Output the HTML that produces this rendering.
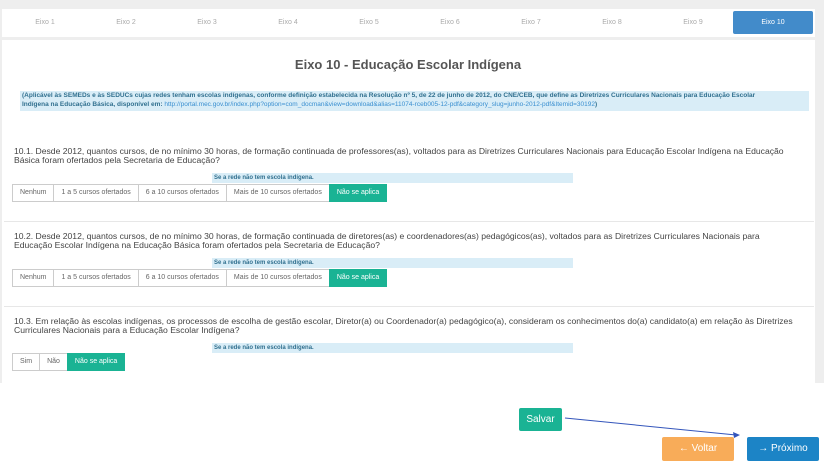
<!DOCTYPE html>
<html><head><meta charset="utf-8"><style>
*{box-sizing:border-box;margin:0;padding:0}
body{width:824px;height:463px;background:#fff;font-family:"Liberation Sans",sans-serif;position:relative;overflow:hidden;color:#444}
.bgtop{position:absolute;left:0;top:0;width:824px;height:383px;background:#eeeeee}
.card{position:absolute;left:2px;top:9px;width:813px;height:28px;background:#fff}
.main{position:absolute;left:2px;top:40px;width:813px;height:343px;background:#fff}
.tab{position:absolute;top:11px;height:23px;width:80px;font-size:7px;color:#aaa;text-align:center;line-height:23px}
.tab.act{background:#428bca;color:#fff;border-radius:2px}
.title{position:absolute;left:0;width:816px;top:57px;text-align:center;font-size:13px;font-weight:bold;color:#555}
.info{position:absolute;left:20px;top:91px;width:789px;height:20px;background:#d9edf7;font-size:6.5px;font-weight:bold;color:#31708f;line-height:8.5px;padding:1px 2px;white-space:nowrap}
.info a{color:#3a8fd0;font-weight:normal;text-decoration:none}
.q{position:absolute;left:14px;font-size:8.6px;line-height:9px;color:#444;white-space:nowrap}
.hint{position:absolute;left:212px;width:361px;height:10px;background:#d9edf7;font-size:6px;font-weight:bold;color:#31708f;line-height:10px;padding-left:2px}
.bg{position:absolute;left:13px;display:flex;height:18px}
.bg span{border:1px solid #ccc;margin-left:-1px;font-size:7px;color:#666;line-height:16px;padding:0 7px;background:#fff}
.bg span.on{background:#1ab394;border-color:#1ab394;color:#fff}
.sep{position:absolute;left:4px;width:810px;height:1px;background:#e7e7e7}
.btn{position:absolute;color:#fff;font-size:10px;text-align:center;border-radius:2px}
</style></head><body>
<div class="bgtop"></div>
<div class="card"></div>
<div class="main"></div>
<div class="tab" style="left:5px">Eixo 1</div>
<div class="tab" style="left:86px">Eixo 2</div>
<div class="tab" style="left:167px">Eixo 3</div>
<div class="tab" style="left:248px">Eixo 4</div>
<div class="tab" style="left:329px">Eixo 5</div>
<div class="tab" style="left:410px">Eixo 6</div>
<div class="tab" style="left:491px">Eixo 7</div>
<div class="tab" style="left:572px">Eixo 8</div>
<div class="tab" style="left:653px">Eixo 9</div>
<div class="tab act" style="left:733px">Eixo 10</div>
<div class="title">Eixo 10 - Educação Escolar Indígena</div>
<div class="info">(Aplicável às SEMEDs e às SEDUCs cujas redes tenham escolas indígenas, conforme definição estabelecida na Resolução nº 5, de 22 de junho de 2012, do CNE/CEB, que define as Diretrizes Curriculares Nacionais para Educação Escolar<br>Indígena na Educação Básica, disponível em: <a>http://portal.mec.gov.br/index.php?option=com_docman&amp;view=download&amp;alias=11074-rceb005-12-pdf&amp;category_slug=junho-2012-pdf&amp;Itemid=30192</a>)</div>

<div class="q" style="top:147px">10.1. Desde 2012, quantos cursos, de no mínimo 30 horas, de formação continuada de professores(as), voltados para as Diretrizes Curriculares Nacionais para Educação Escolar Indígena na Educação<br>Básica foram ofertados pela Secretaria de Educação?</div>
<div class="hint" style="top:173px">Se a rede não tem escola indígena.</div>
<div class="bg" style="top:184px"><span>Nenhum</span><span>1 a 5 cursos ofertados</span><span>6 a 10 cursos ofertados</span><span>Mais de 10 cursos ofertados</span><span class="on">Não se aplica</span></div>
<div class="sep" style="top:221px"></div>

<div class="q" style="top:232px">10.2. Desde 2012, quantos cursos, de no mínimo 30 horas, de formação continuada de diretores(as) e coordenadores(as) pedagógicos(as), voltados para as Diretrizes Curriculares Nacionais para<br>Educação Escolar Indígena na Educação Básica foram ofertados pela Secretaria de Educação?</div>
<div class="hint" style="top:258px">Se a rede não tem escola indígena.</div>
<div class="bg" style="top:269px"><span>Nenhum</span><span>1 a 5 cursos ofertados</span><span>6 a 10 cursos ofertados</span><span>Mais de 10 cursos ofertados</span><span class="on">Não se aplica</span></div>
<div class="sep" style="top:306px"></div>

<div class="q" style="top:317px">10.3. Em relação às escolas indígenas, os processos de escolha de gestão escolar, Diretor(a) ou Coordenador(a) pedagógico(a), consideram os conhecimentos do(a) candidato(a) em relação às Diretrizes<br>Curriculares Nacionais para a Educação Escolar Indígena?</div>
<div class="hint" style="top:343px">Se a rede não tem escola indígena.</div>
<div class="bg" style="top:353px"><span>Sim</span><span>Não</span><span class="on">Não se aplica</span></div>

<div class="btn" style="left:519px;top:408px;width:43px;height:23px;line-height:23px;background:#1ab394">Salvar</div>
<div class="btn" style="left:662px;top:437px;width:72px;height:24px;line-height:24px;background:#f8ac59"><b>←</b> Voltar</div>
<div class="btn" style="left:747px;top:437px;width:72px;height:24px;line-height:24px;background:#1c84c6"><b>→</b> Próximo</div>
<svg style="position:absolute;left:0;top:0" width="824" height="463"><line x1="565" y1="418" x2="736" y2="435" stroke="#3355bb" stroke-width="1"/><polygon points="740,435 733,432 734,438" fill="#3355bb"/></svg>
</body></html>
